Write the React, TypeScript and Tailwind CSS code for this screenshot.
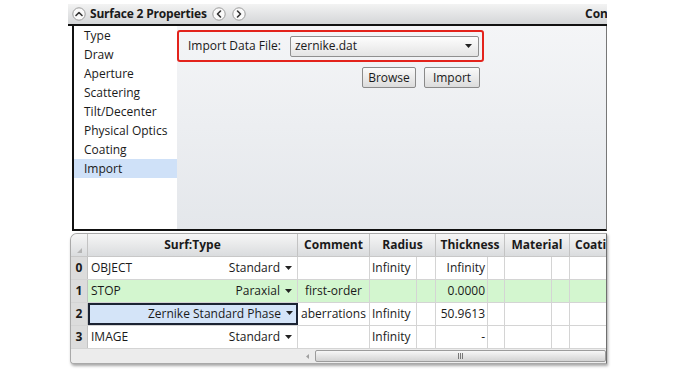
import React from "react";

const font = { fontFamily: '"Open Sans", "Noto Sans", sans-serif' };

const navItems = [
  "Type",
  "Draw",
  "Aperture",
  "Scattering",
  "Tilt/Decenter",
  "Physical Optics",
  "Coating",
  "Import",
];

// small down caret used in dropdown cells
function Caret() {
  return (
    <svg width="7" height="4" viewBox="0 0 7 4" className="inline-block ml-[5px] mb-[2px]">
      <path d="M0 0h7L3.5 4z" fill="#222" />
    </svg>
  );
}

function CircleBtn({ dir }: { dir: "up" | "left" | "right" }) {
  const d =
    dir === "up" ? "M4 8.5l3-3 3 3" : dir === "left" ? "M8.5 4l-3 3 3 3" : "M5.5 4l3 3-3 3";
  return (
    <svg width="14" height="14" viewBox="0 0 14 14">
      <circle cx="7" cy="7" r="6.2" fill="#fafafa" stroke="#9a9a9a" strokeWidth="1" />
      <path d={d} fill="none" stroke="#333" strokeWidth="1.6" strokeLinecap="round" strokeLinejoin="round" />
    </svg>
  );
}

type Row = {
  n: string;
  name: string;
  type: string;
  comment: string;
  radius: string;
  thick: string;
  bg: string;
  selected?: boolean;
};

const rows: Row[] = [
  { n: "0", name: "OBJECT", type: "Standard", comment: "", radius: "Infinity", thick: "Infinity", bg: "bg-white" },
  { n: "1", name: "STOP", type: "Paraxial", comment: "first-order", radius: "", thick: "0.0000", bg: "bg-[#d3f6cf]" },
  { n: "2", name: "", type: "Zernike Standard Phase", comment: "aberrations", radius: "Infinity", thick: "50.9613", bg: "bg-white", selected: true },
  { n: "3", name: "IMAGE", type: "Standard", comment: "", radius: "Infinity", thick: "-", bg: "bg-white" },
];

export default function App() {
  return (
    <div className="w-[687px] h-[373px] bg-white overflow-hidden text-[12px] text-[#1a1a1a]" style={font}>
      <div className="ml-[68px] mt-[4px] w-[539px]">
        {/* title bar */}
        <div className="h-[22px] flex items-center bg-gradient-to-b from-[#f3f3f3] to-[#d4d6d8] border-b-2 border-[#111] pl-[4px]">
          <CircleBtn dir="up" />
          <span className="ml-[4px] font-bold text-[12px] tracking-[-0.2px]">Surface 2 Properties</span>
          <span className="ml-[5px] flex gap-[6px]">
            <CircleBtn dir="left" />
            <CircleBtn dir="right" />
          </span>
          <span className="ml-auto font-bold w-[22px] overflow-hidden whitespace-nowrap">Configuration</span>
        </div>

        {/* upper panel */}
        <div className="ml-[4px] h-[205px] flex border-l-2 border-b-2 border-[#111] border-r border-r-[#777]">
          <div className="w-[103px] bg-white">
            {navItems.map((t) => (
              <div
                key={t}
                className={`h-[19px] leading-[19px] pl-[10px] ${t === "Import" ? "bg-[#cfe1f8]" : ""}`}
              >
                {t}
              </div>
            ))}
          </div>
          <div className="flex-1 bg-gradient-to-b from-[#f4f5f7] to-[#e4e7eb] pt-[4px]">
            <div className="w-[307px] h-[32px] border-2 border-[#e3231c] rounded-[3px] flex items-center pl-[9px]">
              <span>Import Data File:</span>
              <div className="ml-[9px] w-[189px] h-[21px] border border-[#8f8f8f] rounded-[2px] bg-gradient-to-b from-[#fdfdfd] to-[#e4e4e4] flex items-center pl-[4px] pr-[6px]">
                <span>zernike.dat</span>
                <svg width="7" height="4" viewBox="0 0 7 4" className="ml-auto">
                  <path d="M0 0h7L3.5 4z" fill="#222" />
                </svg>
              </div>
            </div>
            <div className="flex gap-[8px] ml-[185px] mt-[5px]">
              <button className="w-[54px] h-[21px] border border-[#8a8a8a] rounded-[2px] bg-gradient-to-b from-[#fafafa] to-[#dcdcdc]">
                Browse
              </button>
              <button className="w-[56px] h-[21px] border border-[#8a8a8a] rounded-[2px] bg-gradient-to-b from-[#fafafa] to-[#dcdcdc]">
                Import
              </button>
            </div>
          </div>
        </div>

        {/* table */}
        <div className="ml-[2px] mt-[2px] w-[537px] border border-[#a9a9a9] border-r-[#6f6f6f] rounded-tl-[7px] rounded-bl-[4px] overflow-hidden shadow-[1px_2px_3px_rgba(0,0,0,0.35)] bg-[#e6e6e6]">
          {/* header */}
          <div className="h-[23px] flex font-bold bg-gradient-to-b from-[#f6f6f6] to-[#dadcde] border-b border-[#c8c8c8]">
            <div className="w-[17px] shrink-0 border-r border-[#c3c3c3] relative">
              <svg width="5" height="5" viewBox="0 0 5 5" className="absolute left-[6px] bottom-[3px]">
                <path d="M5 0v5H0z" fill="#b5b5b5" />
              </svg>
            </div>
            <div className="w-[210px] shrink-0 border-r border-[#c3c3c3] flex items-center justify-center">Surf:Type</div>
            <div className="w-[72px] shrink-0 border-r border-[#c3c3c3] flex items-center justify-center">Comment</div>
            <div className="w-[66px] shrink-0 border-r border-[#c3c3c3] flex items-center justify-center">Radius</div>
            <div className="w-[69px] shrink-0 border-r border-[#c3c3c3] flex items-center justify-center">Thickness</div>
            <div className="w-[65px] shrink-0 border-r border-[#c3c3c3] flex items-center justify-center">Material</div>
            <div className="w-[60px] shrink-0 flex items-center pl-[5px]">Coating</div>
          </div>

          {rows.map((r) => (
            <div key={r.n} className={`h-[23px] flex ${r.bg} border-b border-[#d4d4d4]`}>
              <div className="w-[17px] shrink-0 bg-[#dcdcdc] border-r border-[#c3c3c3] font-bold flex items-center justify-center">
                {r.n}
              </div>
              {r.selected ? (
                <div className="w-[210px] shrink-0 bg-[#d4e4f8] border-2 border-[#1b2333] flex items-center justify-end pr-[3px] whitespace-nowrap">
                  {r.type}
                  <Caret />
                </div>
              ) : (
                <div className="w-[210px] shrink-0 border-r border-[#d4d4d4] flex items-center pl-[3px] pr-[5px] whitespace-nowrap">
                  <span>{r.name}</span>
                  <span className="ml-auto">
                    {r.type}
                    <Caret />
                  </span>
                </div>
              )}
              <div className="w-[72px] shrink-0 border-r border-[#d4d4d4] flex items-center justify-center whitespace-nowrap overflow-visible">
                {r.comment}
              </div>
              <div className="w-[47px] shrink-0 border-r border-[#d4d4d4] flex items-center pl-[2px] whitespace-nowrap">
                {r.radius}
              </div>
              <div className="w-[19px] shrink-0 border-r border-[#d4d4d4]" />
              <div className="w-[52px] shrink-0 border-r border-[#d4d4d4] flex items-center justify-end pr-[2px]">
                {r.thick}
              </div>
              <div className="w-[17px] shrink-0 border-r border-[#d4d4d4]" />
              <div className="w-[47px] shrink-0 border-r border-[#d4d4d4]" />
              <div className="w-[18px] shrink-0 border-r border-[#d4d4d4]" />
              <div className="w-[60px] shrink-0" />
            </div>
          ))}

          {/* horizontal scrollbar */}
          <div className="h-[14px] flex items-center bg-[#ececec]">
            <div className="w-[228px] shrink-0" />
            <div className="w-[16px] shrink-0 flex items-center justify-center">
              <svg width="3" height="5" viewBox="0 0 3 5">
                <path d="M3 0v5L0 2.5z" fill="#a0a0a0" />
              </svg>
            </div>
            <div className="flex-1 h-[12px] border border-[#9c9c9c] rounded-[2px] bg-gradient-to-b from-[#f7f7f7] to-[#d3d3d3] flex items-center justify-center">
              <span className="flex gap-[1px]">
                <span className="w-px h-[6px] bg-[#777]" />
                <span className="w-px h-[6px] bg-[#777]" />
                <span className="w-px h-[6px] bg-[#777]" />
              </span>
            </div>
          </div>
        </div>
      </div>
    </div>
  );
}
